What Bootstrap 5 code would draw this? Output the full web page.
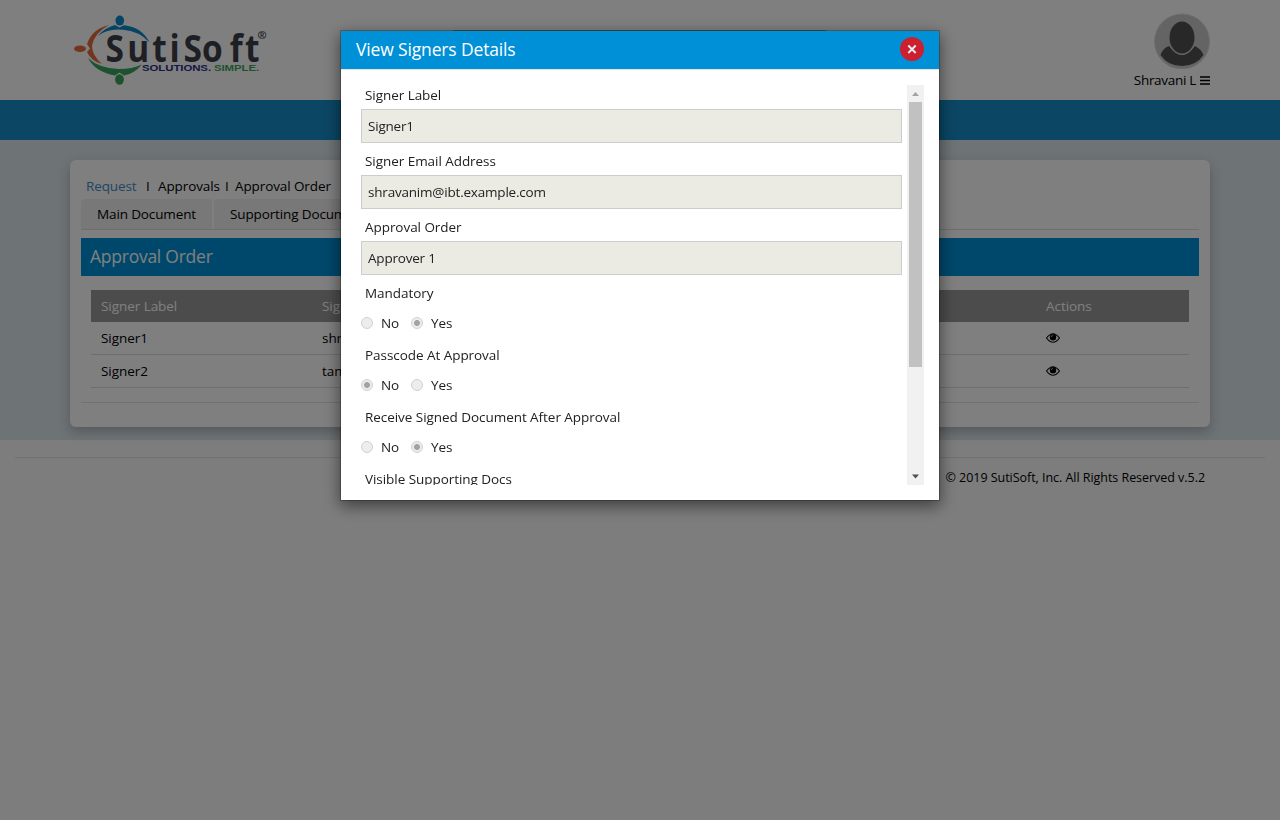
<!DOCTYPE html>
<html lang="en">
<head>
<meta charset="utf-8">
<meta name="viewport" content="width=device-width, initial-scale=1">
<title>View Signers Details</title>
<link href="https://cdn.jsdelivr.net/npm/bootstrap@5.3.0/dist/css/bootstrap.min.css" rel="stylesheet">
<style>
body{font-family:"Open Sans","Noto Sans",sans-serif;font-size:13.5px;line-height:20px;color:#000;background:#fafafa;letter-spacing:-.05px;overflow:hidden}
.wrap{width:1140px;margin:0 auto}
.top-head{height:100px;background:#fff}
.user-box{padding-top:13px;line-height:18px;font-size:13.5px;letter-spacing:-.3px}
.user-name{margin-top:2px}
.top-bar{height:40px;background:#168dca}
.page-main{height:300px;background:#dce6eb;padding-top:20px}
.panel-box{height:267px;background:#fff;border-radius:6px;box-shadow:0 5px 12px rgba(60,60,80,.3);padding:16px 11px 0}
.crumbs{padding-left:5px;height:23px;letter-spacing:-.1px}
.crumbs a{color:#428bca;text-decoration:none}
.doc-tabs{height:31px;border-bottom:1px solid #ddd;gap:2px;letter-spacing:-.13px}
.doc-tabs .nav-link{height:30px;padding:5px 16px;color:#000;background:#f0f0f0;border:0;border-radius:4px 4px 0 0}
.panel-title{height:38px;margin-top:8px;padding:0 9px;background:#0090d7;color:#fff;font-size:17.5px;letter-spacing:-.25px;line-height:37px}
.signers{width:1098px;margin:14px 10px 14px;table-layout:fixed;border-collapse:separate;border-spacing:0}
.signers th{height:32px;padding:0 10px;background:#999;color:#fff;font-weight:400}
.signers td{height:33px;padding:0 10px;border-bottom:1px solid #ddd}
.signers svg{display:block}
.foot{margin:17px 15px 0;border-top:1px solid #e3e3e3;padding:10px 60px 0 0;font-size:12.5px;letter-spacing:-.04px}
.modal-dialog{width:600px;max-width:none;margin:30px 0 0 340px}
.modal-content{border:1px solid rgba(0,0,0,.25);border-radius:0;box-shadow:0 5px 15px rgba(0,0,0,.5);background-clip:padding-box;color:#212121}
.modal-content::before{content:"";position:absolute;top:-1px;left:112px;width:373px;height:1px;background:rgba(0,0,0,.3)}
.modal-header{height:39px;padding:0 15px;border-radius:0;border-bottom:1px solid #e5e5e5;background:#0090d7;color:#fff}
.modal-header .modal-title{font-size:17.5px;letter-spacing:-.15px;line-height:36px;padding-bottom:2px;font-weight:400}
.close-btn{width:24px;height:24px;margin-bottom:2px;padding:0;border:0;background:none;line-height:0}
.modal-body{height:430px;padding:15px}
.scroll-view{height:400px;padding:0 5px;overflow:hidden}
.fld-label{display:block;padding-left:4px;height:24px}
.form-control{height:34px;border:1px solid #ccc;border-radius:0;background:#ebebe4!important;font-size:13.5px;padding:6px;letter-spacing:-.2px;color:#222;margin-bottom:8px}
.radios{height:32px;margin-bottom:6px}
.radios input{appearance:none;width:12px;height:12px;margin:0 8px 0 0;border:1px solid #d0d0d0;border-radius:50%;background:#ededed}
.radios input:checked{background:radial-gradient(circle,#a3a3a3 0 2.6px,#ececec 3.3px)}
.radios label{width:50px}
.sbar{width:17px;height:400px;background:#f1f1f1}
.sbar svg{flex:none}
.thumb{width:13px;height:265px;background:#c1c1c1}
</style>
</head>
<body>
<header class="top-head">
  <div class="wrap d-flex justify-content-between">
    <svg width="204" height="90" viewBox="66 0 204 90" style="margin-left:-4px" role="img" aria-label="SutiSoft">
      <g fill="#0a89c9"><ellipse cx="119.800" cy="20.600" rx="4.300" ry="5"/><path d="M97.500 36Q105 27.500 115 25L119.500 27.500L124 25.200Q142 27 149.500 42.500Q139 31 123 29.800Q108 28 97.500 36Z"/></g>
      <g fill="#e56a3c"><ellipse cx="80" cy="48.800" rx="6" ry="3.200"/><path d="M109 25Q92 29 87 44L90 48.500L87 52Q91 61 102 64Q92 55 92 46Q94 33 109 25Z"/></g>
      <g fill="#3ba55d"><ellipse cx="119.500" cy="79.500" rx="4.400" ry="5.200"/><path d="M88 58Q99 68.500 119 69Q132 69 142 64.500Q134 74 124 75.500L119.500 72.500L115 75.500Q95 72 88 58Z"/></g>
      <text y="62" transform="scale(.88 1)" x="120 144.500 173 192.500 208.500 229.500 261 278.500" font-family="Open Sans" font-size="38" font-weight="700" fill="#3b3e49">SutiSoft</text>
      <text x="257.500" y="38.500" font-family="Open Sans" font-size="11" font-weight="700" fill="#3b3e49">®</text>
      <text x="142" y="70.700" font-family="Liberation Sans" font-size="8.500" font-weight="700" fill="#2a2f86" textLength="69" lengthAdjust="spacingAndGlyphs">SOLUTIONS.</text>
      <text x="214" y="70.700" font-family="Liberation Sans" font-size="8.500" font-weight="700" fill="#3ba55d" textLength="45" lengthAdjust="spacingAndGlyphs">SIMPLE.</text>
    </svg>
    <div class="user-box d-flex flex-column align-items-end">
      <svg width="56" height="56" viewBox="0 0 56 56"><circle cx="28" cy="28.500" r="27.500" fill="#c9c9c9" stroke="#ddd"/><path d="M6.500 42Q9 35 15 33L20 38Q28 46 36 38L41 33Q47 36 49.500 42Q42 53 28 53Q14 53 6.500 42Z" fill="#505050"/><ellipse cx="28" cy="24.500" rx="14" ry="17.500" fill="#c9c9c9"/><ellipse cx="28" cy="24.500" rx="12.500" ry="16" fill="#505050"/></svg>
      <div class="user-name d-flex align-items-center gap-1"><span>Shravani L</span><svg width="10" height="9" viewBox="0 0 10 9"><path d="M0 1H10M0 4.500H10M0 8H10" stroke="#000" stroke-width="1.700"/></svg></div>
    </div>
  </div>
</header>
<nav class="top-bar"></nav>
<main class="page-main">
  <div class="wrap panel-box">
    <div class="crumbs d-flex"><a href="#" style="width:60px">Request</a><span style="width:12px">I</span><span style="width:67px">Approvals</span><span style="width:10px">I</span><span>Approval Order</span></div>
    <div class="doc-tabs nav"><a class="nav-link" href="#">Main Document</a><a class="nav-link" href="#">Supporting Documents</a></div>
    <div class="panel-title">Approval Order</div>
    <table class="signers">
      <colgroup><col style="width:221px"><col style="width:724px"><col></colgroup>
      <thead><tr><th>Signer Label</th><th>Signer Email</th><th>Actions</th></tr></thead>
      <tbody>
        <tr><td>Signer1</td><td>shravanim@ibt.example.com</td><td><svg width="14" height="10" viewBox="0 0 14 10"><path d="M.5 5Q7-3.600 13.500 5Q7 13.600.5 5Z" fill="none" stroke="#000" stroke-width="1.100"/><circle cx="7" cy="4.300" r="3.200"/><path d="M5.200 4.200Q5.300 2.600 7 2.500" fill="none" stroke="#ccc" stroke-width=".8"/></svg></td></tr>
        <tr><td>Signer2</td><td>tam</td><td><svg width="14" height="10" viewBox="0 0 14 10"><path d="M.5 5Q7-3.600 13.500 5Q7 13.600.5 5Z" fill="none" stroke="#000" stroke-width="1.100"/><circle cx="7" cy="4.300" r="3.200"/><path d="M5.200 4.200Q5.300 2.600 7 2.500" fill="none" stroke="#ccc" stroke-width=".8"/></svg></td></tr>
      </tbody>
    </table>
    <div class="border-top"></div>
  </div>
</main>
<footer class="foot text-end">© 2019 SutiSoft, Inc. All Rights Reserved v.5.2</footer>

<div class="modal-backdrop show"></div>
<div class="modal d-block overflow-hidden" tabindex="-1">
  <div class="modal-dialog">
    <div class="modal-content">
      <div class="modal-header d-flex align-items-center justify-content-between">
        <h4 class="modal-title">View Signers Details</h4>
        <button class="close-btn" aria-label="Close"><svg width="24" height="24" viewBox="0 0 24 24"><circle cx="12" cy="12" r="12" fill="#cc1f2f"/><path d="M8.300 8.500L15.700 16M15.700 8.500L8.300 16" stroke="#e6edf5" stroke-width="1.900"/></svg></button>
      </div>
      <div class="modal-body d-flex">
        <div class="scroll-view flex-grow-1">
          <label class="fld-label">Signer Label</label>
          <input class="form-control" value="Signer1" disabled>
          <label class="fld-label">Signer Email Address</label>
          <input class="form-control" value="shravanim@ibt.example.com" disabled>
          <label class="fld-label">Approval Order</label>
          <input class="form-control" value="Approver 1" disabled>
          <label class="fld-label">Mandatory</label>
          <div class="radios d-flex"><label class="d-flex align-items-center"><input type="radio" disabled>No</label><label class="d-flex align-items-center"><input type="radio" checked disabled>Yes</label></div>
          <label class="fld-label">Passcode At Approval</label>
          <div class="radios d-flex"><label class="d-flex align-items-center"><input type="radio" checked disabled>No</label><label class="d-flex align-items-center"><input type="radio" disabled>Yes</label></div>
          <label class="fld-label">Receive Signed Document After Approval</label>
          <div class="radios d-flex"><label class="d-flex align-items-center"><input type="radio" disabled>No</label><label class="d-flex align-items-center"><input type="radio" checked disabled>Yes</label></div>
          <label class="fld-label">Visible Supporting Docs</label>
        </div>
        <div class="sbar d-flex flex-column align-items-center">
          <svg width="17" height="17" viewBox="0 0 17 17"><path d="M5 11L8.500 7L12 11Z" fill="#a3a3a3"/></svg>
          <div class="thumb"></div>
          <svg class="mt-auto" width="17" height="17" viewBox="0 0 17 17"><path d="M5 6.500L8.500 10.500L12 6.500Z" fill="#505050"/></svg>
        </div>
      </div>
    </div>
  </div>
</div>
<script src="https://cdn.jsdelivr.net/npm/bootstrap@5.3.0/dist/js/bootstrap.bundle.min.js"></script>
</body>
</html>
